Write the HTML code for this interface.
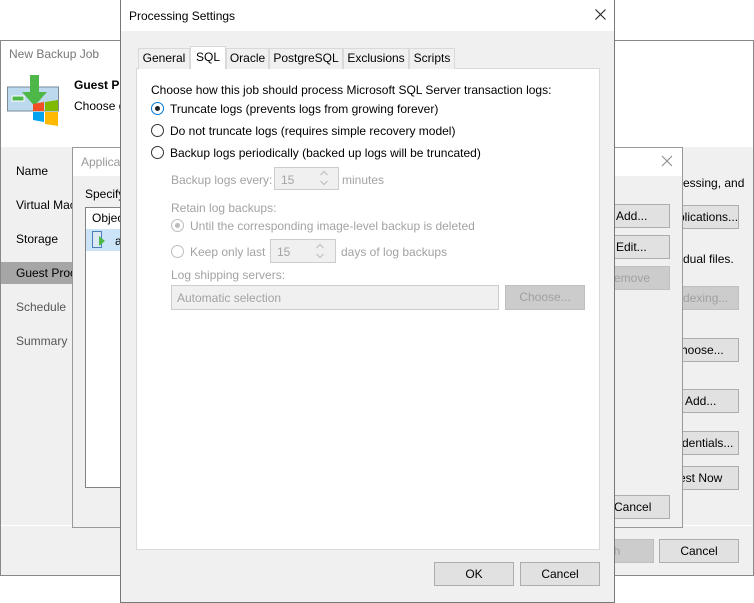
<!DOCTYPE html>
<html><head><style>
*{box-sizing:border-box;margin:0;padding:0}
body{width:754px;height:603px;background:#fff;position:relative;overflow:hidden;font-family:"Liberation Sans",sans-serif;font-size:12px;color:#000}
.a{position:absolute}
.btn{position:absolute;background:#e1e1e1;border:1px solid #adadad;text-align:center;line-height:22px;height:24px;font-size:12px}
.dis{color:#a0a0a0;background:#cccccc;border-color:#bfbfbf}
.t{position:absolute;white-space:nowrap}
.g{color:#a3a3a3}
.rad{position:absolute;width:13px;height:13px;border:1px solid #333;border-radius:50%;background:#fff}
.rad.on::after{content:"";position:absolute;left:3px;top:3px;width:5px;height:5px;border-radius:50%;background:#222}
.rad.d{border-color:#bcbcbc}
.rad.d.on::after{background:#bcbcbc}
.tab{position:absolute;top:48px;height:21px;border:1px solid #d9d9d9;border-bottom:none;background:#f0f0f0;text-align:center;line-height:19px}
</style></head><body>
<!-- back window -->
<div class="a" style="left:0;top:40px;width:754px;height:536px;border:1px solid #888;background:#f0f0f0"></div>
<div class="a" style="left:1px;top:41px;width:752px;height:106px;background:#fff"></div>
<div class="t" style="left:9px;top:47px;color:#777;font-size:12px">New Backup Job</div>
<svg class="a" style="left:7px;top:75px" width="53" height="54">
<rect x="0.5" y="12" width="51" height="24" fill="#bcd9ee" stroke="#7a8b99"/>
<rect x="5" y="21" width="12" height="5" fill="#4db848" stroke="#fff"/>
<path d="M23 0h9v17h8l-12.5 14L15 17h8z" fill="#4db848"/>
<path d="M26 29l11-2v9H26z" fill="#f25022"/><path d="M38 27l13-2v11H38z" fill="#7fba00"/>
<path d="M26 37h11v10l-11-2z" fill="#00a4ef"/><path d="M38 37h13v14l-13-2z" fill="#ffb900"/>
</svg>
<div class="t" style="left:74px;top:78px;font-weight:bold">Guest Pr</div>
<div class="t" style="left:74px;top:99px">Choose g</div>
<div class="a" style="left:1px;top:262px;width:72px;height:22px;background:#a6a6a6"></div>
<div class="t" style="left:16px;top:164px">Name</div>
<div class="t" style="left:16px;top:198px">Virtual Mac</div>
<div class="t" style="left:16px;top:232px">Storage</div>
<div class="t" style="left:16px;top:266px">Guest Proc</div>
<div class="t" style="left:16px;top:300px;color:#555">Schedule</div>
<div class="t" style="left:16px;top:334px;color:#555">Summary</div>
<div class="a" style="left:1px;top:525px;width:752px;height:1px;background:#fff"></div>
<div class="t" style="left:683px;top:176px">essing, and</div>
<div class="t" style="left:683px;top:252px">dual files.</div>
<div class="btn" style="left:660px;top:205px;width:79px;text-align:left;padding-left:17px">plications...</div>
<div class="btn dis" style="left:660px;top:286px;width:79px;text-align:left;padding-left:22px">dexing...</div>
<div class="btn" style="left:660px;top:338px;width:79px;text-align:left;padding-left:20px">hoose...</div>
<div class="btn" style="left:660px;top:389px;width:79px;text-align:left;padding-left:24px">Add...</div>
<div class="btn" style="left:660px;top:431px;width:79px;text-align:left;padding-left:21px">dentials...</div>
<div class="btn" style="left:660px;top:466px;width:79px;text-align:left;padding-left:18px">est Now</div>
<div class="btn dis" style="left:574px;top:539px;width:80px">sh</div>
<div class="btn" style="left:659px;top:539px;width:80px">Cancel</div>
<!-- middle window -->
<div class="a" style="left:72px;top:147px;width:611px;height:381px;border:1px solid #999;background:#f0f0f0"></div>
<div class="a" style="left:73px;top:148px;width:609px;height:28px;background:#fff"></div>
<div class="t" style="left:81px;top:155px;color:#999">Applica</div>
<svg class="a" style="left:661px;top:155px" width="12" height="12"><path d="M1 1L11 11M11 1L1 11" stroke="#888" stroke-width="1"/></svg>
<div class="t" style="left:85px;top:187px">Specify</div>
<div class="a" style="left:85px;top:207px;width:40px;height:281px;border:1px solid #828282;background:#fff"></div>
<div class="t" style="left:92px;top:211px">Objec</div>
<div class="a" style="left:86px;top:229px;width:38px;height:22px;background:#cce4f7"></div>
<svg class="a" style="left:92px;top:231px" width="14" height="18"><rect x="0.5" y="0.5" width="9" height="16" fill="#dbe9f5" stroke="#4a7fb5"/><path d="M7 5l6 5-6 5z" fill="#4db848"/></svg>
<div class="t" style="left:115px;top:234px">a</div>
<div class="btn" style="left:600px;top:204px;width:70px;text-align:left;padding-left:15px">Add...</div>
<div class="btn" style="left:600px;top:235px;width:70px;text-align:left;padding-left:15px">Edit...</div>
<div class="btn dis" style="left:600px;top:266px;width:70px;text-align:left;padding-left:13px">emove</div>
<div class="btn" style="left:600px;top:495px;width:70px;text-align:left;padding-left:13px">Cancel</div>
<!-- front dialog -->
<div class="a" style="left:120px;top:0;width:495px;height:603px;border:1px solid #777;background:#f0f0f0"></div>
<div class="a" style="left:121px;top:0;width:493px;height:31px;background:#fff"></div>
<div class="t" style="left:129px;top:9px">Processing Settings</div>
<svg class="a" style="left:595px;top:9px" width="11" height="11"><path d="M0.5 0.5L10.5 10.5M10.5 0.5L0.5 10.5" stroke="#222" stroke-width="1.1"/></svg>
<div class="a" style="left:136px;top:68px;width:464px;height:482px;border:1px solid #d9d9d9;background:#fff"></div>
<div class="tab" style="left:138px;width:52px">General</div>
<div class="tab" style="left:190px;top:46px;height:23px;width:36px;background:#fff;line-height:21px">SQL</div>
<div class="tab" style="left:226px;width:43px">Oracle</div>
<div class="tab" style="left:269px;width:74px">PostgreSQL</div>
<div class="tab" style="left:343px;width:66px">Exclusions</div>
<div class="tab" style="left:409px;width:46px">Scripts</div>
<div class="t" style="left:151px;top:83px">Choose how this job should process Microsoft SQL Server transaction logs:</div>
<div class="rad on" style="left:151px;top:102px;border-color:#0078d7"></div>
<div class="t" style="left:170px;top:102px">Truncate logs (prevents logs from growing forever)</div>
<div class="rad" style="left:151px;top:124px"></div>
<div class="t" style="left:170px;top:124px">Do not truncate logs (requires simple recovery model)</div>
<div class="rad" style="left:151px;top:146px"></div>
<div class="t" style="left:170px;top:146px">Backup logs periodically (backed up logs will be truncated)</div>
<div class="t g" style="left:171px;top:173px">Backup logs every:</div>
<div class="a" style="left:274px;top:167px;width:65px;height:23px;border:1px solid #ccc;background:#f0f0f0"></div>
<div class="t g" style="left:281px;top:173px">15</div>
<svg class="a" style="left:319px;top:170px" width="10" height="17"><path d="M1.5 5L5 1.5 8.5 5M1.5 11L5 14.5 8.5 11" fill="none" stroke="#bbb"/></svg>
<div class="t g" style="left:342px;top:173px">minutes</div>
<div class="t g" style="left:171px;top:201px">Retain log backups:</div>
<div class="rad d on" style="left:171px;top:219px"></div>
<div class="t g" style="left:190px;top:219px">Until the corresponding image-level backup is deleted</div>
<div class="rad d" style="left:171px;top:245px"></div>
<div class="t g" style="left:190px;top:245px">Keep only last</div>
<div class="a" style="left:270px;top:239px;width:66px;height:24px;border:1px solid #ccc;background:#f0f0f0"></div>
<div class="t g" style="left:277px;top:245px">15</div>
<svg class="a" style="left:315px;top:243px" width="10" height="17"><path d="M1.5 5L5 1.5 8.5 5M1.5 11L5 14.5 8.5 11" fill="none" stroke="#bbb"/></svg>
<div class="t g" style="left:341px;top:245px">days of log backups</div>
<div class="t g" style="left:171px;top:268px">Log shipping servers:</div>
<div class="a" style="left:171px;top:285px;width:328px;height:25px;border:1px solid #ccc;background:#f0f0f0"></div>
<div class="t g" style="left:177px;top:291px">Automatic selection</div>
<div class="btn dis" style="left:505px;top:285px;width:80px;height:25px">Choose...</div>
<div class="btn" style="left:434px;top:562px;width:80px">OK</div>
<div class="btn" style="left:520px;top:562px;width:80px">Cancel</div>
</body></html>
